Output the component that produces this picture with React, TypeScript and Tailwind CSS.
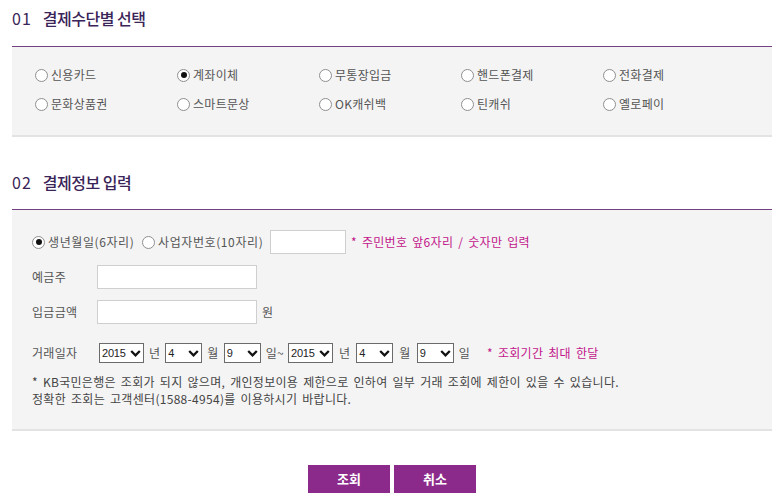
import React from "react";

const FONT = { fontFamily: '"Noto Sans CJK KR", "Noto Sans", sans-serif' };

function Radio({ checked }: { checked?: boolean }) {
  return (
    <span className="relative inline-flex h-[13px] w-[13px] shrink-0 items-center justify-center rounded-full border border-[#8f8f8f] bg-white">
      {checked && <span className="h-[6px] w-[6px] rounded-full bg-[#111]" />}
    </span>
  );
}

function RadioLabel({ label, checked, className = "" }: { label: string; checked?: boolean; className?: string }) {
  return (
    <label className={`flex items-center gap-[3px] leading-[20px] text-[12px] text-[#555] ${className}`}>
      <Radio checked={checked} />
      <span>{label}</span>
    </label>
  );
}

function Select({ value, wide }: { value: string; wide?: boolean }) {
  return (
    <span
      className={`flex h-[20px] items-center justify-between border border-[#6b6b6b] bg-white pl-[2px] pr-[2px] text-[11px] leading-none tracking-[-0.2px] text-[#222] ${
        wide ? "w-[45px]" : "w-[37px]"
      }`}
      style={{ fontFamily: '"Liberation Sans", sans-serif' }}
    >
      <span>{value}</span>
      <svg width="11" height="10" viewBox="0 0 11 10" className="shrink-0">
        <path d="M1.2 3 L5.5 7.3 L9.8 3" fill="none" stroke="#111" strokeWidth="2.3" />
      </svg>
    </span>
  );
}

const methods = [
  ["신용카드", false],
  ["계좌이체", true],
  ["무통장입금", false],
  ["핸드폰결제", false],
  ["전화결제", false],
  ["문화상품권", false],
  ["스마트문상", false],
  ["OK캐쉬백", false],
  ["틴캐쉬", false],
  ["옐로페이", false],
] as const;

export default function App() {
  return (
    <div className="h-[503px] w-[783px] bg-white" style={FONT}>
      <div className="ml-[12px] w-[760px]">
        {/* Section 1 */}
        <div className="flex h-[46px] items-start pt-[8px]">
          <h2 className="flex items-center gap-[11px] text-[16px] leading-[20px] text-[#3a2458]">
            <span className="font-normal tracking-[1px]">01</span>
            <span className="font-medium tracking-[-0.5px]">결제수단별 선택</span>
          </h2>
        </div>
        <div className="border-t border-b-2 border-t-[#74407f] border-b-[#e3e3e3] bg-[#f4f4f4] pb-[21px] pl-[23px] pt-[18px] tracking-[0.3px]">
          <div className="grid grid-cols-[142px_142px_142px_142px_142px] gap-y-[9px]">
            {methods.map(([label, checked]) => (
              <RadioLabel key={label} label={label} checked={checked} />
            ))}
          </div>
        </div>

        {/* Section 2 */}
        <div className="flex h-[72px] items-start pt-[35px]">
          <h2 className="flex items-center gap-[11px] text-[16px] leading-[20px] text-[#3a2458]">
            <span className="font-normal tracking-[1px]">02</span>
            <span className="font-medium tracking-[-0.5px]">결제정보 입력</span>
          </h2>
        </div>
        <div className="border-t border-b-2 border-t-[#74407f] border-b-[#e3e3e3] bg-[#f4f4f4] pb-[22px] pl-[20px] pt-[20px] text-[12px] tracking-[0.3px] text-[#555] [word-spacing:2px]">
          <div className="flex h-[24px] items-center">
            <RadioLabel label="생년월일(6자리)" checked className="w-[110px] tracking-[0.6px]" />
            <RadioLabel label="사업자번호(10자리)" className="w-[128px] tracking-[0.6px]" />
            <input className="h-[24px] w-[76px] border border-[#cfcfcf] bg-white outline-none" />
            <span className="ml-[5px] text-[#c2168b]">* 주민번호 앞6자리 / 숫자만 입력</span>
          </div>
          <div className="mt-[11px] flex h-[24px] items-center">
            <span className="w-[65px]">예금주</span>
            <input className="h-[24px] w-[160px] border border-[#cfcfcf] bg-white outline-none" />
          </div>
          <div className="mt-[11px] flex h-[24px] items-center">
            <span className="w-[65px]">입금금액</span>
            <input className="h-[24px] w-[160px] border border-[#cfcfcf] bg-white outline-none" />
            <span className="ml-[5px]">원</span>
          </div>
          <div className="mt-[19px] flex h-[20px] items-center">
            <span className="w-[67px]">거래일자</span>
            <Select value="2015" wide />
            <span className="mx-[5px]">년</span>
            <Select value="4" />
            <span className="mx-[5px]">월</span>
            <Select value="9" />
            <span className="ml-[5px] mr-[4px]">일~</span>
            <Select value="2015" wide />
            <span className="mx-[6px]">년</span>
            <Select value="4" />
            <span className="mx-[6px]">월</span>
            <Select value="9" />
            <span className="ml-[5px]">일</span>
            <span className="ml-[17px] text-[#c2168b]">* 조회기간 최대 한달</span>
          </div>
          <div className="mt-[10px] leading-[17px] text-[#444]">
            <p>* KB국민은행은 조회가 되지 않으며, 개인정보이용 제한으로 인하여 일부 거래 조회에 제한이 있을 수 있습니다.</p>
            <p>정확한 조회는 고객센터(1588-4954)를 이용하시기 바랍니다.</p>
          </div>
        </div>

        {/* Buttons */}
        <div className="mt-[34px] flex justify-center gap-[4px]">
          <button className="h-[28px] w-[82px] bg-[#8c2a8c] text-[13px] font-bold text-white">조회</button>
          <button className="h-[28px] w-[82px] bg-[#8c2a8c] text-[13px] font-bold text-white">취소</button>
        </div>
      </div>
    </div>
  );
}
